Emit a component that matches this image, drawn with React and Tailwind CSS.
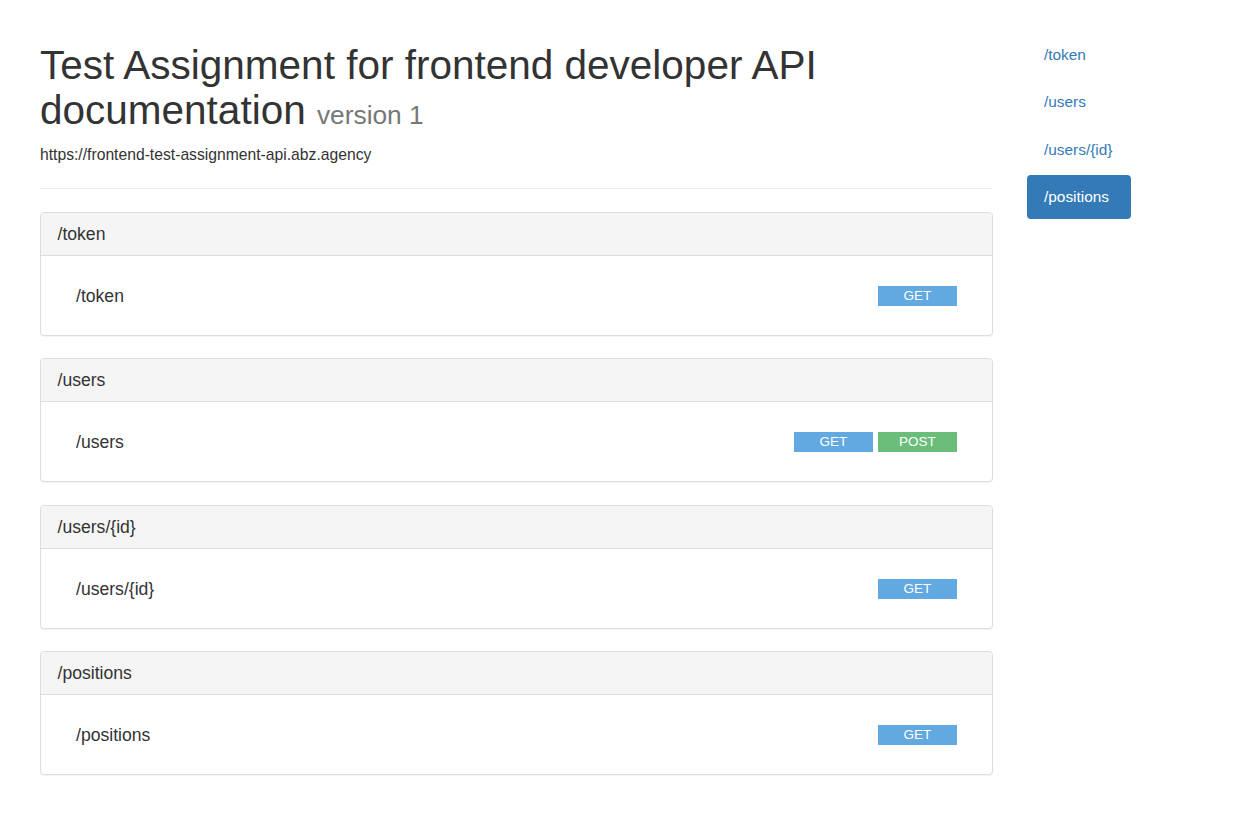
import React from "react";

const sections = [
  { name: "/token", methods: ["GET"] },
  { name: "/users", methods: ["GET", "POST"] },
  { name: "/users/{id}", methods: ["GET"] },
  { name: "/positions", methods: ["GET"] },
];

const methodColor = {
  GET: "bg-[#62a9e2]",
  POST: "bg-[#6bbd7a]",
};

const Panel = ({ name, methods }) => (
  <div className="mb-[22.4px] rounded-[4px] border border-[#ddd] bg-white shadow-[0_1px_1px_rgba(0,0,0,0.05)]">
    <div className="h-[43px] flex items-center px-[16.5px] bg-[#f5f5f5] border-b border-[#ddd] rounded-t-[4px] text-[17.6px] text-[#333]">
      {name}
    </div>
    <div className="h-[79px] flex items-center justify-between pl-[35px] pr-[35px] pt-[1px]">
      <span className="text-[17.6px] text-[#333]">{name}</span>
      <div className="flex gap-[5px]">
        {methods.map((m) => (
          <span
            key={m}
            className={`${methodColor[m]} w-[79px] h-[20px] flex items-center justify-center text-[13.5px] text-white`}
          >
            {m}
          </span>
        ))}
      </div>
    </div>
  </div>
);

export default function App() {
  return (
    <div className="min-h-[821px] bg-white font-['Liberation_Sans',Arial,sans-serif] text-[#333] flex px-[40px]">
      {/* main column */}
      <main className="w-[953px] shrink-0 pt-[43px]">
        <h1 className="text-[40.5px] leading-[1.1] text-[#333]">
          Test Assignment for frontend developer API documentation{" "}
          <small className="text-[26.3px] text-[#777]">version 1</small>
        </h1>
        <p className="mt-[12px] text-[15.7px] leading-[22px]">
          https://frontend-test-assignment-api.abz.agency
        </p>
        <hr className="mt-[22px] mb-[23px] border-0 border-t border-[#eee]" />
        {sections.map((s) => (
          <Panel key={s.name} {...s} />
        ))}
      </main>

      {/* side nav */}
      <nav className="ml-[34px] pt-[33px] w-[170px]">
        <ul className="flex flex-col gap-[3.4px]">
          {sections.map((s, i) => {
            const active = i === sections.length - 1;
            return (
              <li key={s.name}>
                <a
                  className={
                    active
                      ? "inline-block h-[44px] leading-[44px] px-[17px] w-[104px] rounded-[4px] bg-[#337ab7] text-white text-[15.4px]"
                      : "inline-block h-[44px] leading-[44px] px-[17px] text-[#337ab7] text-[15.4px]"
                  }
                >
                  {s.name}
                </a>
              </li>
            );
          })}
        </ul>
      </nav>
    </div>
  );
}
